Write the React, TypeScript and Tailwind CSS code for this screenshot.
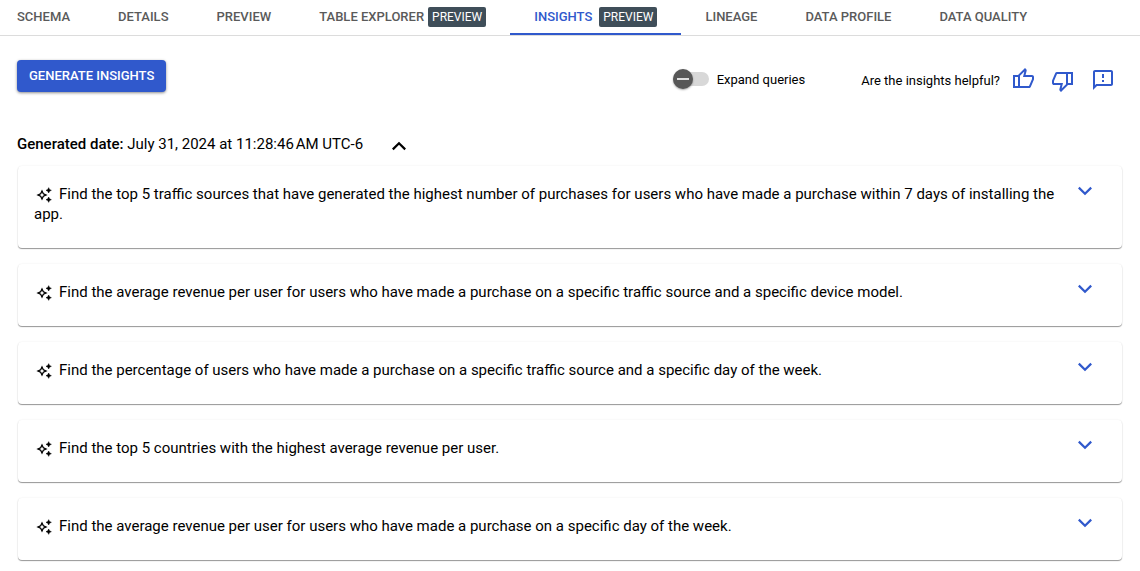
import { useState } from "react";

const tabs = [
  { label: "SCHEMA" },
  { label: "DETAILS" },
  { label: "PREVIEW" },
  { label: "TABLE EXPLORER", preview: true },
  { label: "INSIGHTS", preview: true, active: true },
  { label: "LINEAGE" },
  { label: "DATA PROFILE" },
  { label: "DATA QUALITY" },
];

const insights = [
  "Find the top 5 traffic sources that have generated the highest number of purchases for users who have made a purchase within 7 days of installing the app.",
  "Find the average revenue per user for users who have made a purchase on a specific traffic source and a specific device model.",
  "Find the percentage of users who have made a purchase on a specific traffic source and a specific day of the week.",
  "Find the top 5 countries with the highest average revenue per user.",
  "Find the average revenue per user for users who have made a purchase on a specific day of the week.",
];

function Tabs() {
  return (
    <nav className="flex h-9 gap-12 overflow-hidden border-b border-[#dcdcdc] pl-[17px] text-[13px] leading-5 font-medium whitespace-nowrap">
      {tabs.map((tab) => (
        <a
          key={tab.label}
          href="#"
          aria-current={tab.active ? "page" : undefined}
          className={
            tab.active
              ? "-mx-6 flex items-start gap-[7px] border-b-2 border-[#3059cc] px-6 pt-[7px] text-[#3059cc]"
              : "flex items-start gap-1 pt-[7px] text-[#5a5a5a]"
          }
        >
          <span>{tab.label}</span>
          {tab.preview && (
            <span className="rounded-xs bg-[#3f4e59] px-1 text-xs leading-5 font-normal text-white">PREVIEW</span>
          )}
        </a>
      ))}
    </nav>
  );
}

function Sparkles() {
  return (
    <svg
      viewBox="0 0 24 24"
      className="mr-[7px] ml-0.5 inline-block size-4 align-[-4px]"
      fill="currentColor"
      aria-hidden="true"
    >
      <path
        d="M19 9l1.25-2.75L23 5l-2.75-1.25L19 1l-1.25 2.75L15 5l2.75 1.25zM19 15l-1.25 2.75L15 19l2.75 1.25L19 23l1.25-2.75L23 19l-2.75-1.25z"
        stroke="currentColor"
        strokeWidth="0.8"
      />
      <path d="M9 3.6 6.3 9.3.6 12l5.7 2.7L9 20.4l2.7-5.7 5.7-2.7-5.7-2.7zM9 8.2l1.3 2.5 2.5 1.3-2.5 1.3L9 15.8l-1.3-2.5L5.2 12l2.5-1.3z" fillRule="evenodd" />
    </svg>
  );
}

function Chevron({ up = false }: { up?: boolean }) {
  return (
    <svg viewBox="0 0 16 16" className="size-4" fill="none" stroke="currentColor" strokeWidth="2.2" aria-hidden="true">
      <path d={up ? "M1.8 11.4 8 5.2l6.2 6.2" : "M1.8 4.6 8 10.8l6.2-6.2"} />
    </svg>
  );
}

export default function App() {
  const [expanded, setExpanded] = useState(false);
  return (
    <div className="bg-white font-[Roboto,sans-serif] text-black">
      <Tabs />
      <main className="pr-[18px] pb-2 pl-[17px]">
        <div className="flex items-start pt-6">
          <button className="h-8 rounded-sm bg-[#3059cc] px-3 text-[13px] font-medium text-white shadow-[0_1px_3px_rgba(0,0,0,0.45)]">
            GENERATE INSIGHTS
          </button>
          <label className="ml-auto flex items-center gap-2 pt-2.5 text-[13px] leading-5">
            <input
              type="checkbox"
              role="switch"
              className="peer sr-only"
              checked={expanded}
              onChange={(e) => setExpanded(e.target.checked)}
            />
            <span className="-mt-0.5 flex h-3.5 w-9 items-center rounded-full bg-[#d8d8d8] peer-checked:justify-end">
              <span className="flex size-5 items-center justify-center rounded-full bg-[#575757] shadow-[0_1px_2px_rgba(0,0,0,0.35)]">
                <span className="h-0.5 w-3 bg-[#dedede]" />
              </span>
            </span>
            Expand queries
          </label>
          <div className="ml-14 flex items-center pt-[9px] text-[13px] leading-5">
            <span>Are the insights helpful?</span>
            <div className="mr-[7px] ml-[11px] flex items-start gap-4 text-[#3059cc]">
              <button aria-label="Helpful" className="-mt-0.5">
                <svg viewBox="0 -960 960 960" className="size-6" fill="currentColor">
                  <path d="M720-120H280v-520l280-280 50 50q7 7 11.5 19t4.5 23v14l-44 174h258q32 0 56 24t24 56v80q0 7-2 15t-4 15L794-168q-9 20-30 34t-44 14Zm-360-80h360l120-280v-80H480l54-220-174 174v406Zm-80-440v80H160v360h120v80H80v-520h200Z" />
                </svg>
              </button>
              <button aria-label="Not helpful">
                <svg viewBox="0 -960 960 960" className="size-6" fill="currentColor">
                  <path d="M240-840h440v520L400-40l-50-50q-7-7-11.5-19t-4.5-23v-14l44-174H120q-32 0-56-24t-24-56v-80q0-7 2-15t4-15l120-282q9-20 30-34t44-14Zm360 80H240L120-480v80h360l-54 220 174-174v-406Zm80 440v-80h120v-360H680v-80h200v520H680Z" />
                </svg>
              </button>
              <button aria-label="Send feedback" className="-mt-px">
                <svg viewBox="0 0 24 24" className="size-6" fill="currentColor">
                  <path d="M20 2H4c-1.1 0-1.99.9-1.99 2L2 22l4-4h14c1.1 0 2-.9 2-2V4c0-1.1-.9-2-2-2zm0 14H5.17l-.59.59-.58.58V4h16v12zm-9-4h2v2h-2zm0-6h2v4h-2z" />
                </svg>
              </button>
            </div>
          </div>
        </div>

        <div className="mt-[41px] flex items-center text-[15px] leading-5">
          <h2 className="font-normal">
            <span className="font-medium">Generated date:</span> July 31, 2024 at 11:28:46{"\u202f"}AM UTC-6
          </h2>
          <button aria-label="Collapse insights" className="mt-1 ml-7">
            <Chevron up />
          </button>
        </div>

        <ul className="mt-3 ml-px flex flex-col gap-4">
          {insights.map((text) => (
            <li
              key={text}
              className="flex items-start rounded-sm bg-white px-4 pt-[18px] pb-6 shadow-[0_1px_1px_rgba(0,0,0,0.4),0_0_2px_rgba(0,0,0,0.08)]"
            >
              <p className="flex-1 text-[15px] leading-5">
                <Sparkles />
                {text}
              </p>
              <button aria-label="Expand insight" className="-mt-px mr-[13px] ml-5 text-[#3059cc]">
                <Chevron />
              </button>
            </li>
          ))}
        </ul>
      </main>
    </div>
  );
}
